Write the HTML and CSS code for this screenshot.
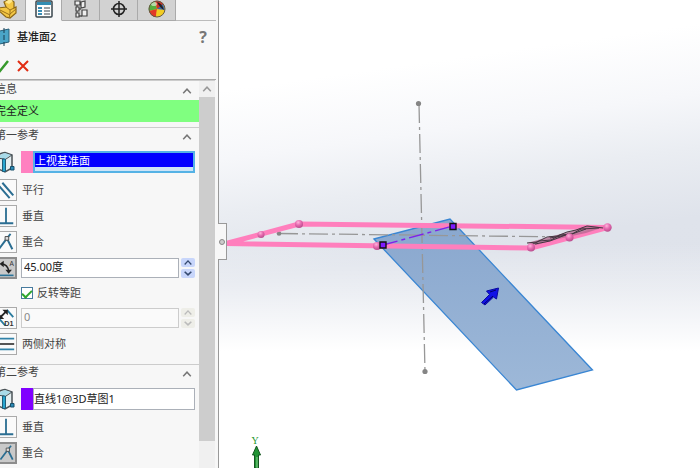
FILE: index.html
```html
<!DOCTYPE html>
<html lang="zh-CN">
<head>
<meta charset="utf-8">
<title>基准面2</title>
<link rel="stylesheet" href="styles.css">
</head>
<body>
<svg class="defs" aria-hidden="true">
  <defs>
    <symbol id="up" viewBox="0 0 10 8"><path d="M1.2 6.3 5 2.2l3.8 4.1" fill="none" stroke="currentColor" stroke-width="1.5"/></symbol>
    <symbol id="down" viewBox="0 0 10 8"><path d="M1.2 2 5 5.6 8.800 2" fill="none" stroke="currentColor" stroke-width="1.8"/></symbol>
    <symbol id="face" viewBox="0 0 24 24">
      <path d="M2 8Q5 3 11 2.500L18 5v13l-7 4-9-4z" fill="#e4eff1" stroke="#4b5357" stroke-width="1.500"/>
      <path d="M4 8q2-4 7-5l6 2-6 4z" fill="#a9dbe9"/>
      <path d="M3 8l7 1M12 9l6-4" fill="none" stroke="#4b5357"/>
      <path d="M8.500 9h3v12.500h-3z" fill="#27a5cf" stroke="#205d78"/>
      <path d="M16.500 16.500h3.500v3.500h-3.500z" fill="#2d8cb8" stroke="#174e69"/>
    </symbol>
    <symbol id="parallel" viewBox="0 0 22 22"><path d="M3 6l12 14M7 3l12 14" stroke="#2b6e92" stroke-width="2.200"/></symbol>
    <symbol id="perp" viewBox="0 0 22 22"><path d="M11 2v17M2 19h17" stroke="#2b6e92" stroke-width="2"/></symbol>
    <symbol id="coin" viewBox="0 0 22 22"><path d="M12 7 3 19M12 7l6 12" fill="none" stroke="#2b6e92" stroke-width="2.200"/><path d="M12 7l4-5" stroke="#2b6e92" stroke-width="2"/><path d="M10 5h4v4h-4z" fill="#ddd" stroke="#444"/></symbol>
  </defs>
</svg>
<main class="app">
  <aside class="side">
    <nav class="tabs">
      <button class="tab first" aria-label="设计树"><svg width="28" height="20" viewBox="0 0 28 20"><path d="M4 8l8-1-2-5 6-3 4 3v6l2-1v6l-6 5-4-1-8-7z" fill="#f4c744" stroke="#8b6717" stroke-width="1.200"/><path d="M12 7l4 3v4l6-5M16 14l-1 4M16 10l4-2M4 9l12 6" fill="none" stroke="#9b721a"/><path d="M11 2l5-3 3 2-4 3z" fill="#ffe88a"/></svg></button>
      <button class="tab active" aria-label="属性"><svg width="18" height="18" viewBox="0 0 18 18"><rect x="1" y="1" width="16" height="16" rx="1" fill="#fff" stroke="#39454c" stroke-width="1.500"/><path d="M2 2h14v3H2z" fill="#338eb4"/><path d="M3 7h4v2H3zm0 3h4v2H3zm0 3h4v2H3z" fill="#3b8eb5"/><path d="M9 8h6M9 11h6M9 14h6" stroke="#39454c"/></svg></button>
      <button class="tab" aria-label="配置"><svg width="16" height="18" viewBox="0 0 16 18"><path d="M4 4v12h5M4 9h4" fill="none" stroke="#555" stroke-width="1.300"/><path d="M2 1h5v4H2zM3 7h3v4H3zM3 13h3v4H3zM8 2l4-1v6l-4 1zM9 10h5v6H9z" fill="#eee" stroke="#444" stroke-width="1.200"/></svg></button>
      <button class="tab" aria-label="尺寸"><svg width="18" height="18" viewBox="0 0 18 18"><circle cx="9" cy="9" r="5.500" fill="none" stroke="#222" stroke-width="1.600"/><path d="M9 1v16M1 9h16" stroke="#222" stroke-width="1.500"/></svg></button>
      <button class="tab" aria-label="外观"><svg width="18" height="18" viewBox="0 0 18 18"><circle cx="9" cy="9" r="8" fill="#f2ca28"/><path d="M9 9 1 11A8 8 0 0 1 7 1z" fill="#54ae3d"/><path d="M9 9 7 1q6-1 9 4z" fill="#cf3429"/><path d="M9 9 1 11q2 6 7 6z" fill="#e23827"/><path d="M9 9l-1 8q7 0 9-7z" fill="#f2cc22"/><path d="M9 9l8 1-2-6z" fill="#3a68ae"/><path d="M9 2q5 1 7 8-4-2-7-8z" fill="#222"/><ellipse cx="6" cy="4" rx="3" ry="2" fill="#fff" opacity=".55"/><circle cx="9" cy="9" r="8" fill="none" stroke="#665a45"/></svg></button>
    </nav>
    <header class="title">
      <svg width="16" height="18" viewBox="0 0 16 18"><path d="M1 4l14-3v13L1 17z" fill="#4aa5c8" stroke="#285e79"/><path d="M10 0v18" stroke="#183d50" stroke-dasharray="5 2"/></svg>
      <h1>基准面2</h1>
      <button class="help" aria-label="帮助">?</button>
    </header>
    <div class="actions">
      <button aria-label="确定"><svg width="16" height="14" viewBox="0 0 16 14"><path d="M2 8l4 4 8-10" fill="none" stroke="#36992b" stroke-width="2.500"/></svg></button>
      <button aria-label="取消"><svg width="14" height="14" viewBox="0 0 14 14"><path d="M2 2l10 10M12 2 2 12" stroke="#e22c12" stroke-width="2"/></svg></button>
    </div>
    <div class="scroller">
      <div class="panels">
        <section class="info">
          <h2>信息<svg><use href="#up"/></svg></h2>
          <p class="status">完全定义</p>
        </section>
        <section>
          <h2>第一参考<svg><use href="#up"/></svg></h2>
          <div class="rows">
            <label class="row pick"><svg class="face"><use href="#face"/></svg><span class="chip pink"></span><input class="selected" readonly aria-label="第一参考" value="上视基准面"></label>
            <div class="row"><button class="tool" id="a1"><svg><use href="#parallel"/></svg></button><label for="a1">平行</label></div>
            <div class="row"><button class="tool" id="a2"><svg><use href="#perp"/></svg></button><label for="a2">垂直</label></div>
            <div class="row"><button class="tool" id="a3"><svg><use href="#coin"/></svg></button><label for="a3">重合</label></div>
            <div class="row"><button class="tool on" aria-label="角度"><svg viewBox="0 0 22 22"><path d="M2 20h17" stroke="#2b7499" stroke-width="2"/><path d="M4 6q8 0 9 9" fill="none" stroke="#222" stroke-width="1.800"/><path d="M2 6l5-4v8zM13 18l-4-5h8z" fill="#222"/><text class="mark" x="14" y="9">A</text></svg></button><input class="num" aria-label="角度" value="45.00度"><span class="spin"><button aria-label="增加"><svg><use href="#up"/></svg></button><button aria-label="减少"><svg><use href="#down"/></svg></button></span></div>
            <label class="row check"><input type="checkbox" checked>反转等距</label>
            <div class="row"><button class="tool" aria-label="距离"><svg viewBox="0 0 22 22"><path d="M2 10l8 9M12 2l7 8" stroke="#2b7c9f" stroke-width="2"/><path d="M5 10l6-6" stroke="#222" stroke-width="2"/><path d="M7 2h6v6zM3 6v6h6z" fill="#222"/><text class="mark bold" x="9" y="20">D1</text></svg></button><input class="num" aria-label="距离" value="0" disabled><span class="spin"><button disabled aria-label="增加"><svg><use href="#up"/></svg></button><button disabled aria-label="减少"><svg><use href="#down"/></svg></button></span></div>
            <div class="row"><button class="tool" id="a4"><svg viewBox="0 0 22 22"><path d="M2 5h18M2 17h18" stroke="#3182a8" stroke-width="2"/><path d="M2 11h18" stroke="#444" stroke-width="2"/></svg></button><label for="a4">两侧对称</label></div>
          </div>
        </section>
        <section>
          <h2>第二参考<svg><use href="#up"/></svg></h2>
          <div class="rows">
            <label class="row pick"><svg class="face"><use href="#face"/></svg><span class="chip violet"></span><input readonly aria-label="第二参考" value="直线1@3D草图1"></label>
            <div class="row"><button class="tool" id="b1"><svg><use href="#perp"/></svg></button><label for="b1">垂直</label></div>
            <div class="row"><button class="tool on" id="b2"><svg><use href="#coin"/></svg></button><label for="b2">重合</label></div>
          </div>
        </section>
      </div>
      <div class="bar"><button aria-label="向上滚动"><svg><use href="#up"/></svg></button><div class="thumb"></div></div>
    </div>
  </aside>
  <div class="view">
    <svg class="scene" viewBox="219 0 481 468" preserveAspectRatio="xMinYMin slice">
      <defs>
        <linearGradient id="plane" x1="0" y1="0" x2="0" y2="1"><stop offset="0" stop-color="#89a7ce"/><stop offset="1" stop-color="#9db8d8"/></linearGradient>
        <radialGradient id="ball" cx=".4" cy=".3" r=".7"><stop offset="0" stop-color="#ffb5dc"/><stop offset=".5" stop-color="#e66bb0"/><stop offset="1" stop-color="#b94d8e"/></radialGradient>
      </defs>
      <path d="M374 239l76-20 142.500 151L516.500 390z" fill="url(#plane)" stroke="#3a86d3" stroke-width="1.300"/>
      <g stroke="#979797" stroke-width="1.300" fill="none">
        <path d="M419 104l6 268" stroke-dasharray="19 4 3 4"/>
        <path d="M279 233.500l290 3.500" stroke-dasharray="19 4 3 4"/>
      </g>
      <g fill="#858585"><circle cx="418.500" cy="103.500" r="2.600"/><circle cx="425" cy="371.500" r="2.600"/><circle cx="279" cy="233.500" r="2.300"/></g>
      <path d="M607.500 227.500L299 224l-73 19.500 305 4.500" fill="none" stroke="#ff7fbd" stroke-width="5" stroke-linejoin="round"/>
      <path d="M531 248l76.500-20.500" stroke="#ff7fbd" stroke-width="5"/>
      <path d="M527 243l18-5 24-6 18-6 17 1-18 6-28 6-22 6z" fill="#b3688f" opacity=".75"/>
      <path d="M527 243l10-1 10-5 10-1 10-4 9-2 11-4 16 2M531 245l8-4 12-1 9-5 12-1 9-5 18-1M535 244l15-3 18-7M550 238l22-4 14-5" fill="none" stroke="#443640"/>
      <path d="M383 245l70-19" stroke="#7e22ea" stroke-width="1.400" stroke-dasharray="15 4 4 4"/>
      <g fill="url(#ball)"><circle cx="299" cy="224" r="4"/><circle cx="261" cy="234.500" r="3.500"/><circle cx="377" cy="246" r="4"/><circle cx="531" cy="247.500" r="4"/><circle cx="569.500" cy="237.500" r="4"/><circle cx="607.500" cy="227.500" r="4.200"/></g>
      <g fill="#7d1cff" stroke="#111" stroke-width="1.400"><path d="M380 242h6v6h-6zM450 223.500h6v6h-6z"/></g>
      <path d="M481.500 302.500l8-8-3-3.500 12-3-2 11-3-2-8.500 8z" fill="#1111e6" stroke="#0a0aa0"/>
      <path d="M484 304l9-8M490 292l6-2" stroke="#00006c"/>
      <path d="M254.500 468v-13h-2l4-9 4 9h-2v13z" fill="#209333" stroke="#13551e"/><path d="M257 457v11" stroke="#8bd492"/>
      <text class="axis" x="255" y="444" text-anchor="middle">Y</text>
    </svg>
    <button class="handle" aria-label="折叠面板"><i></i></button>
  </div>
</main>
</body>
</html>
```
FILE: styles.css
```css
* { box-sizing: border-box; }
body {
  margin: 0;
  overflow: hidden;
  font: 11px/16px "Noto Sans", "Noto Sans CJK SC", sans-serif;
  color: #444;
}
button, input { font: inherit; margin: 0; padding: 0; border-radius: 0; }
button { border: 0; background: none; display: grid; place-items: center; }
svg { display: block; }
h1, h2, p { margin: 0; font-size: 11px; font-weight: 400; }
.defs { position: absolute; width: 0; height: 0; }
.app { display: flex; height: 100vh; }

/* property panel: its left edge runs under the window frame */
.side {
  flex: 0 0 225px;
  min-width: 0;
  margin-left: -6px;
  display: flex;
  flex-direction: column;
  background: #f7f7f7;
  border-right: 1px solid #999;
}
.tabs { display: flex; height: 21px; margin-right: 2px; }
.tabs::after { content: ""; flex: 1; border-bottom: 1px solid #bbb; }
.tab {
  width: 38px;
  padding-bottom: 2px;
  background: #d2d2d2;
  border-right: 1px solid #aaa;
  border-bottom: 1px solid #aaa;
}
.tab.first { width: 32px; justify-items: start; }
.tab.active { width: 36px; background: #f7f7f7; border-bottom-color: #f7f7f7; }
.title { display: flex; align-items: center; gap: 7px; height: 32px; }
.title h1 { flex: 1; color: #222; font-weight: 500; }
.help { width: 30px; font: 700 16px/20px "Open Sans", sans-serif; color: #777; }
.actions {
  display: flex;
  align-items: center;
  gap: 6px;
  height: 27px;
  margin-right: 2px;
  border-bottom: 1px solid #aaa;
}
.scroller { flex: 1; min-height: 0; display: flex; margin-right: 3px; border-top: 1px solid #ccc; }
.panels { flex: 1; min-width: 0; overflow: hidden; }
.bar { width: 16px; background: #f0f0f0; display: flex; flex-direction: column; }
.bar button { height: 16px; color: #999; }
.bar svg, h2 svg { width: 10px; height: 8px; }
.thumb { flex: 0 1 89%; background: #cdcdcd; }

section { border-top: 1px solid #ccc; padding-bottom: 9px; }
.info { border-color: #f7f7f7; padding-bottom: 5px; }
h2 {
  display: flex;
  justify-content: space-between;
  height: 18px;
  line-height: 14px;
  padding: 0 7px 0 1px;
}
h2 svg { margin-top: 5px; color: #777; }
.status { height: 22px; line-height: 21px; padding-left: 1px; background: #80ff80; color: #222; }
.rows { display: grid; grid-template-columns: minmax(0, 1fr); gap: 4px; padding-top: 4px; }
.row { display: flex; align-items: center; height: 22px; padding-right: 4px; gap: 4px; }
.pick { gap: 0; height: 24px; margin-bottom: 1px; }
.face { flex: none; width: 24px; height: 24px; margin-right: 3px; }
.chip { flex: none; width: 12px; height: 22px; }
.pink { background: #ff80c0; }
.violet { background: #8000ff; }
.tool { flex: none; width: 23px; height: 22px; border: 1px solid #aaa; background: #fafafa; }
.tool svg { width: 22px; height: 20px; }
.tool.on { background: #c9c9c9; border: 2px solid #8d8d8d; }
.tool.on svg { height: 18px; }
.mark { font: 8px "Liberation Sans", sans-serif; fill: #333; }
.bold { font-weight: 700; }
.row > label { padding-left: 1px; }
.pick input, .num {
  flex: 1;
  min-width: 0;
  height: 22px;
  border: 1px solid #abb0b8;
  background: #fff;
  color: #222;
  padding: 0 0 3px;
}
.pick input.selected {
  border: 2px solid #55b2e5;
  background: linear-gradient(#0000ff 14px, #cce4f7 14px);
  background-origin: padding-box;
  color: #fff;
  padding: 0 0 5px;
}
.row .num { height: 20px; padding: 0 2px 4px; }
.num:disabled { color: #888; background: #fafafa; border-color: #ccc; }
.num + .spin { margin-left: -2px; }
.spin { flex: none; display: grid; gap: 2px; width: 14px; }
.spin button { height: 9px; background: #c8d6fb; color: #34496f; border-radius: 2px; }
.spin button:disabled { background: #eeeee8; color: #bbb; }
.spin svg { width: 10px; height: 7px; }
.check { height: 20px; padding-left: 27px; }
.check input {
  appearance: none;
  width: 12px;
  height: 12px;
  border: 1px solid #477b9e;
  background: #fff;
  display: grid;
  place-items: center;
}
.check input:checked::after {
  content: "";
  width: 8px;
  height: 4px;
  border: solid #2ea62e;
  border-width: 0 0 2px 2px;
  transform: rotate(-45deg);
}

.view {
  position: relative;
  flex: 1;
  min-width: 0;
  background:
    linear-gradient(#fff0 52%, #fff6 62%, #fff 75%),
    linear-gradient(172deg, #fff 17%, #f6f7fa 30%, #eaedf2 40%, #dfe3eb 53%, #dde1ea);
}
.scene { width: 100%; height: 100%; }
.axis { font: 10px "Liberation Serif", serif; fill: #23952b; }
.handle {
  position: absolute;
  left: -1px;
  top: 223px;
  width: 9px;
  height: 37px;
  background: #f7f7f7;
  border: 1px solid #999;
  border-left: 0;
}
.handle i { width: 6px; height: 6px; border: 1px solid #888; border-radius: 50%; background: #ccc; }
```
